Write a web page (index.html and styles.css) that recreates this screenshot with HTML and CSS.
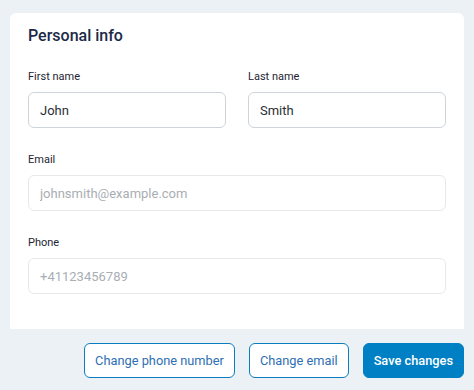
FILE: index.html
```html
<!doctype html>
<html lang="en">
  <head>
    <meta charset="utf-8">
    <meta name="viewport" content="width=device-width, initial-scale=1.0">
    <title>Personal info</title>
    <link rel="stylesheet" href="styles.css">
  </head>
  <body>
    <div class="page">
      <section class="card">
        <h2 class="card-title">Personal info</h2>

        <div class="row">
          <div class="field">
            <label class="field-label" for="first-name">First name</label>
            <input class="field-input" id="first-name" type="text" value="John">
          </div>
          <div class="field">
            <label class="field-label" for="last-name">Last name</label>
            <input class="field-input" id="last-name" type="text" value="Smith">
          </div>
        </div>

        <div class="field">
          <label class="field-label" for="email">Email</label>
          <input class="field-input locked" id="email" type="email" placeholder="johnsmith@example.com" readonly>
        </div>

        <div class="field">
          <label class="field-label" for="phone">Phone</label>
          <input class="field-input locked" id="phone" type="tel" placeholder="+41123456789" readonly>
        </div>
      </section>

      <div class="actions">
        <button class="btn btn-outline" type="button">Change phone number</button>
        <button class="btn btn-outline" type="button">Change email</button>
        <button class="btn btn-primary" type="submit">Save changes</button>
      </div>
    </div>
  </body>
</html>
```

FILE: styles.css
```css
* {
  margin: 0;
  padding: 0;
  box-sizing: border-box;
}

body {
  background: #ecf1f5;
  font-family: Roboto, 'Noto Sans', sans-serif;
  color: #1f2937;
  min-height: 100vh;
}

.page {
  padding: 13px 10px 12px 10px;
}

.card {
  background: #ffffff;
  border-radius: 6px 6px 0 0;
  padding: 14px 18px 35px 18px;
  display: flex;
  flex-direction: column;
  gap: 25px;
}

.card-title {
  font-size: 16px;
  line-height: 18px;
  font-weight: 500;
  color: #1b2a46;
}

.row {
  display: grid;
  grid-template-columns: 1fr 1fr;
  gap: 22px;
}

.field {
  display: flex;
  flex-direction: column;
}

.field-label {
  font-size: 11px;
  line-height: 14px;
  color: #1d2433;
  margin-bottom: 8px;
}

.field-input {
  height: 36px;
  width: 100%;
  border: 1px solid #cfd4db;
  border-radius: 6px;
  padding: 0 11px;
  font-family: inherit;
  font-size: 13px;
  color: #2b2f36;
  background: #ffffff;
  outline: none;
}

.field-input.locked {
  border-color: #e6e8eb;
}

.field-input::placeholder {
  color: #a9aeb4;
}

.actions {
  display: flex;
  justify-content: flex-end;
  gap: 14px;
  margin-top: 14px;
}

.btn {
  height: 35px;
  padding: 0 10px;
  border-radius: 6px;
  font-family: inherit;
  font-size: 12.8px;
  cursor: pointer;
}

.btn-outline {
  background: #ffffff;
  border: 1px solid #0b7dbf;
  color: #2f6fb3;
}

.btn-primary {
  background: #0080c4;
  border: 1px solid #0080c4;
  color: #ffffff;
  font-weight: 500;
}
```
